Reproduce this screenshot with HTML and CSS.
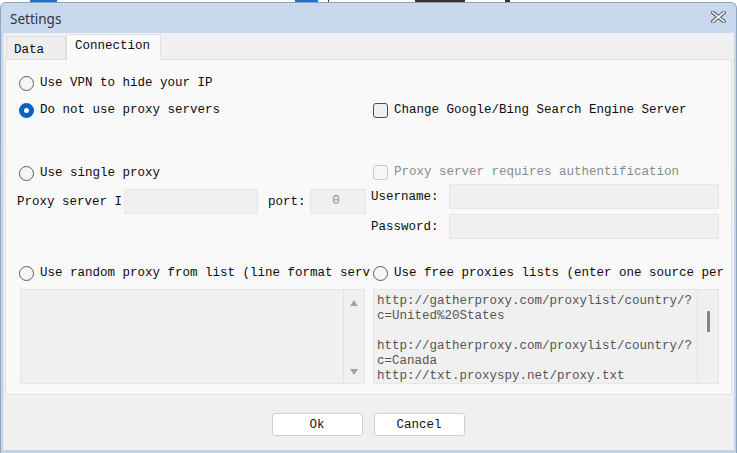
FILE: index.html
```html
<!DOCTYPE html>
<html>
<head>
<meta charset="utf-8">
<link rel="stylesheet" href="styles.css">
</head>
<body>
<div class="desk">
  <span class="dk blue" style="margin-left:30px;width:27px"></span>
  <span class="dk blue" style="margin-left:238px;width:23px"></span>
  <span class="dk dark" style="margin-left:10px;width:1px"></span>
  <span class="dk dark" style="margin-left:86px;width:50px"></span>
  <span class="dk dark" style="margin-left:40px;width:5px"></span>
</div>
<div class="window">
  <div class="titlebar">
    <span class="title">Settings</span>
    <svg class="close" width="15" height="12" viewBox="0 0 15 12">
      <path d="M2 1.5 L13 10.5 M13 1.5 L2 10.5" stroke="#6b6f75" stroke-width="4" stroke-linecap="square"/>
      <path d="M2 1.5 L13 10.5 M13 1.5 L2 10.5" stroke="#f4f6f9" stroke-width="1.6" stroke-linecap="square"/>
    </svg>
  </div>
  <div class="client">
    <div class="tabs">
      <div class="tab">Data</div>
      <div class="tab active">Connection</div>
    </div>
    <div class="panel">
      <div class="col left">
        <div class="opt r1"><span class="radio"></span><span class="lbl">Use VPN to hide your IP</span></div>
        <div class="opt r2"><span class="radio on"></span><span class="lbl">Do not use proxy servers</span></div>
        <div class="opt r3"><span class="radio"></span><span class="lbl">Use single proxy</span></div>
        <div class="proxyrow">
          <span class="plabel">Proxy server I</span>
          <span class="input ipin"></span>
          <span class="portlbl">port:</span>
          <span class="input portin">0</span>
        </div>
        <div class="opt r4"><span class="radio"></span><span class="lbl">Use random proxy from list (line format serv</span></div>
        <div class="area leftarea">
          <div class="areatext"></div>
          <div class="sbar">
            <span class="arr up"></span>
            <span class="arr down"></span>
          </div>
        </div>
      </div>
      <div class="col right">
        <div class="opt c1"><span class="check"></span><span class="lbl">Change Google/Bing Search Engine Server</span></div>
        <div class="opt c2 disabled"><span class="check"></span><span class="lbl">Proxy server requires authentification</span></div>
        <div class="field f1"><span class="flabel">Username:</span><span class="input fin"></span></div>
        <div class="field f2"><span class="flabel">Password:</span><span class="input fin"></span></div>
        <div class="opt c3"><span class="radio"></span><span class="lbl">Use free proxies lists (enter one source per</span></div>
        <div class="area rightarea">
          <div class="areatext">http://gatherproxy.com/proxylist/country/?
c=United%20States

http://gatherproxy.com/proxylist/country/?
c=Canada
http://txt.proxyspy.net/proxy.txt</div>
          <div class="sbar"><span class="thumb"></span></div>
        </div>
      </div>
    </div>
    <div class="footer">
      <button class="btn">Ok</button>
      <button class="btn">Cancel</button>
    </div>
  </div>
</div>
</body>
</html>
```
FILE: styles.css
```css
html, body {
  margin: 0;
  padding: 0;
  background: #ffffff;
  width: 737px;
  height: 453px;
  overflow: hidden;
}
.desk {
  height: 2px;
  display: flex;
}
.dk { height: 2px; display: block; }
.dk.blue { background: #1f6fe0; }
.dk.dark { background: #333; }

.window {
  height: 451px;
  background: linear-gradient(#c8d9ee, #c2d4ea);
  border-radius: 6px 6px 0 0;
  border: 1px solid #8fa6c2;
  border-bottom: none;
  box-sizing: border-box;
  padding: 0 2px 3px 2px;
  display: flex;
  flex-direction: column;
}
.titlebar {
  height: 30px;
  display: flex;
  align-items: center;
  justify-content: space-between;
  padding: 0 8px 0 7px;
}
.title {
  font-family: "Noto Sans", "Open Sans", sans-serif;
  font-size: 13.5px;
  color: #2b3440;
  margin-top: 1px;
}
.close { margin-top: -2px; }

.client {
  flex: 1;
  background: #f0f0f0;
  display: flex;
  flex-direction: column;
  font-family: "Liberation Mono", "DejaVu Sans Mono", monospace;
  font-size: 12.5px;
  color: #0c0c0c;
  border-left: 1px solid #e2e8f0;
}
.tabs {
  height: 26px;
  display: flex;
  align-items: flex-end;
  padding-left: 2px;
}
.tab {
  height: 22px;
  line-height: 26px;
  padding: 0 7px;
  width: 44px;
  background: #eeeeee;
  border: 1px solid #dedede;
  border-bottom: none;
  box-sizing: content-box;
  margin-bottom: 0;
}
.tab.active {
  width: 77px;
  height: 25px;
  line-height: 23px;
  padding: 0 8px;
  background: #fafafa;
  border-color: #e2e2e2;
  margin-bottom: -1px;
  position: relative;
  z-index: 1;
}
.panel {
  height: 336px;
  margin: 0 2px 0 1px;
  background: #f9f9f9;
  border: 1px solid #e2e2e2;
  box-sizing: border-box;
  display: grid;
  grid-template-columns: 352px 348px;
  column-gap: 2px;
  padding: 13px 0 0 11px;
}
.col {
  display: flex;
  flex-direction: column;
  align-items: flex-start;
  min-width: 0;
}
.opt {
  height: 20px;
  display: flex;
  align-items: center;
  white-space: nowrap;
  margin-left: 2px;
}
.lbl { margin-left: 6px; }
.radio {
  width: 15px;
  height: 15px;
  box-sizing: border-box;
  border-radius: 50%;
  border: 1px solid #5d5d5d;
  background: #f5f5f5;
  flex: none;
}
.radio.on {
  border: 5px solid #0a62bf;
  background: #ffffff;
}
.check {
  width: 15px;
  height: 15px;
  box-sizing: border-box;
  border-radius: 3px;
  border: 1px solid #4a4a4a;
  background: #efefef;
  flex: none;
  margin-right: 0;
}
.disabled .check { border-color: #c9c9c9; background: #f7f7f7; }
.disabled .lbl { color: #8a8a8a; }

.r2 { margin-top: 7px; }
.r3 { margin-top: 43px; }
.proxyrow {
  margin-top: 6px;
  height: 25px;
  display: flex;
  align-items: center;
  white-space: nowrap;
}
.input {
  display: block;
  height: 25px;
  box-sizing: border-box;
  background: #f0f0f0;
  border: 1px solid #e6e6e6;
  border-radius: 1px;
}
.plabel { width: 107px; overflow: hidden; }
.ipin { width: 134px; }
.portlbl { margin-left: 10px; width: 42px; }
.portin {
  width: 56px;
  color: #8a8a8a;
  text-align: center;
  line-height: 23px;
  padding-right: 4px;
}
.r4 { margin-top: 49px; }
.area {
  margin-top: 6px;
  height: 95px;
  box-sizing: border-box;
  background: #f0f0f0;
  border: 1px solid #e6e6e6;
  display: flex;
}
.leftarea { width: 345px; margin-left: 3px; }
.rightarea { width: 346px; margin-left: 2px; }
.areatext {
  flex: 1;
  white-space: pre;
  overflow: hidden;
  color: #555;
  line-height: 15px;
  padding: 4px 0 0 3px;
}
.sbar {
  width: 21px;
  border-left: 1px solid #e2e2e2;
  background: #f0f0f0;
  display: flex;
  flex-direction: column;
  align-items: center;
  justify-content: space-between;
  padding: 10px 0 8px;
  box-sizing: border-box;
}
.arr {
  width: 0;
  height: 0;
  border-left: 4.5px solid transparent;
  border-right: 4.5px solid transparent;
}
.arr.up { border-bottom: 6px solid #a3a3a3; }
.arr.down { border-top: 6px solid #a3a3a3; }
.rightarea .sbar { justify-content: flex-start; padding-top: 21px; }
.thumb {
  width: 3px;
  height: 21px;
  background: #858585;
  border-radius: 1px;
}

.c1 { margin-top: 27px; }
.c2 { margin-top: 42px; }
.field {
  height: 25px;
  display: flex;
  align-items: center;
  white-space: nowrap;
}
.f1 { margin-top: 2px; }
.f2 { margin-top: 5px; }
.flabel { width: 78px; }
.fin { width: 270px; }
.c3 { margin-top: 24px; }

.footer {
  flex: 1;
  display: flex;
  justify-content: center;
  align-items: flex-start;
  gap: 11px;
  padding-top: 18px;
  padding-right: 2px;
}
.btn {
  width: 91px;
  height: 23px;
  background: #ffffff;
  border: 1px solid #cfcfcf;
  border-radius: 3px;
  font-family: "Liberation Mono", "DejaVu Sans Mono", monospace;
  font-size: 12.5px;
  color: #111;
  padding: 0;
}
```
